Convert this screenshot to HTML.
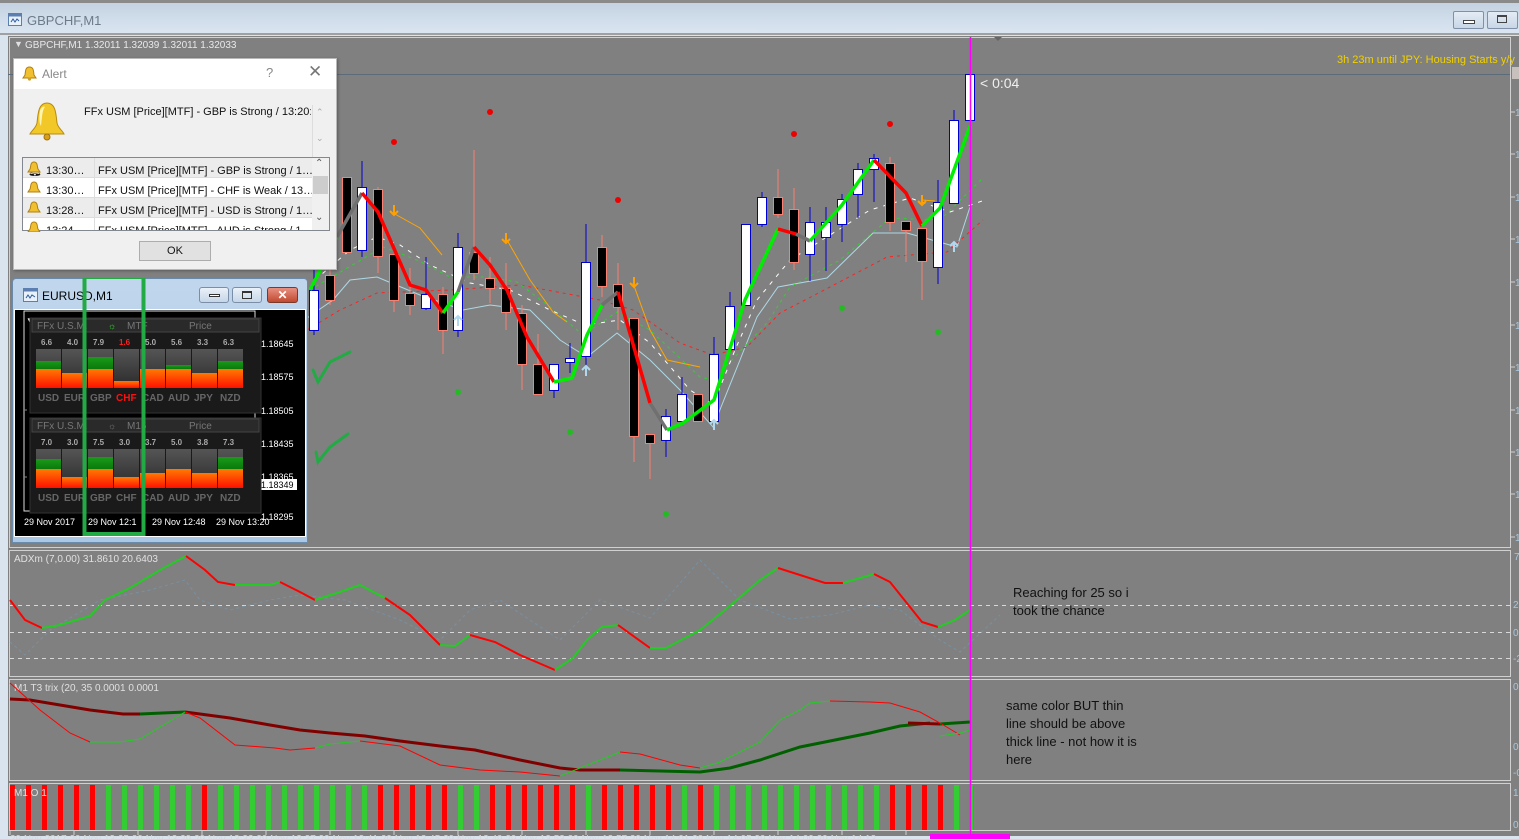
<!DOCTYPE html>
<html><head><meta charset="utf-8">
<style>
*{margin:0;padding:0;box-sizing:border-box}
body{width:1519px;height:839px;overflow:hidden;background:#d9e4ef;font-family:"Liberation Sans",sans-serif;position:relative}
.abs{position:absolute}
</style></head><body>
<!-- top bar -->
<div class="abs" style="left:0;top:0;width:1519px;height:3px;background:#8a8a8a"></div>
<div class="abs" style="left:0;top:3px;width:1519px;height:31px;background:linear-gradient(#c4d2e1,#dbe6f2)"></div>
<div class="abs" style="left:0;top:33px;width:1519px;height:2px;background:#a0a0a0"></div>
<svg class="abs" style="left:8px;top:13px" width="14" height="13"><rect x="0.5" y="0.5" width="13" height="12" fill="#e8f0fa" stroke="#5b7fb0"/><rect x="0.5" y="0.5" width="13" height="3" fill="#5b7fb0"/><path d="M3 9 L5 6 L7 9 L9 6 L11 8" stroke="#2a5aa0" fill="none"/></svg>
<div class="abs" style="left:27px;top:13px;font-size:13px;color:#6d7a88">GBPCHF,M1</div>
<div class="abs" style="left:1453px;top:11px;width:31px;height:18px;border:1px solid #8090a8;border-radius:2px;background:linear-gradient(#e4ecf5,#c8d6e6)"></div>
<div class="abs" style="left:1463px;top:20px;width:12px;height:4px;border:1px solid #444;background:#fff"></div>
<div class="abs" style="left:1487px;top:11px;width:31px;height:18px;border:1px solid #8090a8;border-radius:2px;background:linear-gradient(#e4ecf5,#c8d6e6)"></div>
<div class="abs" style="left:1497px;top:15px;width:10px;height:8px;border:1px solid #444;border-top-width:2px"></div>

<svg class="abs" style="left:0;top:0" width="1519" height="839">
<rect x="8" y="36" width="1511" height="800" fill="#808080"/>
<!-- panel borders -->
<g stroke="#d0d0d0" fill="none" stroke-width="1">
<rect x="9.5" y="37.5" width="1501" height="510"/>
<rect x="9.5" y="550.5" width="1501" height="126"/>
<rect x="9.5" y="679.5" width="1501" height="101"/>
<rect x="9.5" y="783.5" width="1501" height="47"/>
</g>
<line x1="8" y1="74.5" x2="1510" y2="74.5" stroke="#5c6b7a"/>
<rect x="1512" y="67" width="7" height="12" fill="#c8c0bc"/>
<!-- right ticks -->
<g stroke="#d0d0d0">
<line x1="1511" y1="112" x2="1515" y2="112"/><line x1="1511" y1="154" x2="1515" y2="154"/><line x1="1511" y1="197" x2="1515" y2="197"/><line x1="1511" y1="239" x2="1515" y2="239"/><line x1="1511" y1="282" x2="1515" y2="282"/><line x1="1511" y1="325" x2="1515" y2="325"/><line x1="1511" y1="367" x2="1515" y2="367"/><line x1="1511" y1="410" x2="1515" y2="410"/><line x1="1511" y1="452" x2="1515" y2="452"/><line x1="1511" y1="494" x2="1515" y2="494"/><line x1="1511" y1="537" x2="1515" y2="537"/>
</g>
<g font-size="10" fill="#a8c8e0" font-family="Liberation Sans,sans-serif">
<text x="1515" y="116">1</text><text x="1515" y="158">1</text><text x="1515" y="201">1</text><text x="1515" y="243">1</text><text x="1515" y="286">1</text><text x="1515" y="329">1</text><text x="1515" y="371">1</text><text x="1515" y="414">1</text><text x="1515" y="456">1</text><text x="1515" y="498">1</text><text x="1515" y="541">1</text>
<text x="1514" y="560">7</text><text x="1513" y="608">2</text><text x="1513" y="636">0</text><text x="1513" y="662">-2</text><text x="1513" y="690">0</text><text x="1513" y="750">0</text><text x="1513" y="776">-0</text><text x="1513" y="796">1</text><text x="1513" y="828">0</text>
</g>
<text x="1337" y="63" font-size="11" fill="#f0d000">3h 23m until JPY: Housing Starts y/y</text>
<text x="14" y="47" font-size="9" fill="#e0e0e0">▼</text>
<text x="25" y="48" font-size="10" fill="#e8e8e8">GBPCHF,M1  1.32011 1.32039 1.32011 1.32033</text>
<path d="M994 37 L1002 37 L998 41Z" fill="#666"/>

<!-- moving averages -->
<g fill="none" stroke-width="1">
<polyline stroke="#add8e6" points="307,318 333,300 350,280 377,277 420,295 463,310 490,305 530,310 560,340 587,357 617,333 650,360 680,390 713,427 740,360 757,317 778,287 827,278 873,233 907,233 957,247 970,207"/>
<polyline stroke="#ff2020" stroke-dasharray="3,4" points="307,330 340,310 377,293 450,290 520,285 600,300 633,310 680,343 713,355 747,347 780,313 830,287 887,257 947,252 983,220"/>
<polyline stroke="#30d030" stroke-dasharray="3,4" points="310,290 383,247 417,260 450,277 487,277 517,282 550,307 583,335 617,312 650,330 700,377 713,380 767,323 790,287 840,260 890,218 940,220 983,178"/>
<polyline stroke="#ffffff" stroke-dasharray="4,6" points="315,280 350,250 377,237 400,245 430,265 470,283 510,290 550,310 585,325 620,320 650,343 690,390 713,405 735,350 757,300 790,260 830,235 870,210 910,198 950,212 985,200"/>
<polyline stroke="#ffa500" points="393,213 420,228 442,255"/>
<polyline stroke="#ffa500" points="507,240 530,280 553,312 567,322"/>
<polyline stroke="#ffa500" points="633,283 650,330 667,360 700,367"/>
<polyline stroke="#ffa500" points="922,200 935,201"/>
</g>
<!-- candles -->
<g stroke-width="1">
<g stroke="#0000cc" fill="#fff"><line x1="314" y1="255" x2="314" y2="335"/><rect x="309.5" y="290.5" width="9" height="40"/></g>
<g stroke="#fa8072" fill="#000"><line x1="330" y1="265" x2="330" y2="305"/><rect x="325.5" y="275.5" width="9" height="25"/></g>
<g stroke="#fa8072" fill="#000"><rect x="342.5" y="177.5" width="9" height="75"/></g>
<g stroke="#0000cc" fill="#fff"><line x1="362" y1="161" x2="362" y2="257"/><rect x="357.5" y="187.5" width="9" height="63"/></g>
<g stroke="#fa8072" fill="#000"><line x1="378" y1="187" x2="378" y2="273"/><rect x="373.5" y="189.5" width="9" height="67"/></g>
<g stroke="#fa8072" fill="#000"><line x1="394" y1="254" x2="394" y2="312"/><rect x="389.5" y="254.5" width="9" height="46"/></g>
<g stroke="#fa8072" fill="#000"><line x1="410" y1="268" x2="410" y2="315"/><rect x="405.5" y="293.5" width="9" height="12"/></g>
<g stroke="#0000cc" fill="#fff"><line x1="426" y1="257" x2="426" y2="310"/><rect x="421.5" y="294.5" width="9" height="14"/></g>
<g stroke="#fa8072" fill="#000"><line x1="443" y1="287" x2="443" y2="354"/><rect x="438.5" y="294.5" width="9" height="36"/></g>
<g stroke="#0000cc" fill="#fff"><line x1="458" y1="233" x2="458" y2="337"/><rect x="453.5" y="247.5" width="9" height="83"/></g>
<g stroke="#fa8072" fill="#000"><line x1="474" y1="150" x2="474" y2="280"/><rect x="469.5" y="252.5" width="9" height="21"/></g>
<g stroke="#fa8072" fill="#000"><line x1="490" y1="257" x2="490" y2="303"/><rect x="485.5" y="278.5" width="9" height="10"/></g>
<g stroke="#fa8072" fill="#000"><line x1="506" y1="263" x2="506" y2="330"/><rect x="501.5" y="288.5" width="9" height="24"/></g>
<g stroke="#fa8072" fill="#000"><line x1="522" y1="305" x2="522" y2="390"/><rect x="517.5" y="313.5" width="9" height="51"/></g>
<g stroke="#fa8072" fill="#000"><line x1="538" y1="334" x2="538" y2="394"/><rect x="533.5" y="364.5" width="9" height="30"/></g>
<g stroke="#0000cc" fill="#fff"><line x1="554" y1="364" x2="554" y2="398"/><rect x="549.5" y="364.5" width="9" height="26"/></g>
<g stroke="#0000cc" fill="#fff"><line x1="570" y1="343" x2="570" y2="373"/><rect x="565.5" y="358.5" width="9" height="4"/></g>
<g stroke="#0000cc" fill="#fff"><line x1="586" y1="224" x2="586" y2="367"/><rect x="581.5" y="262.5" width="9" height="94"/></g>
<g stroke="#fa8072" fill="#000"><line x1="602" y1="235" x2="602" y2="297"/><rect x="597.5" y="247.5" width="9" height="39"/></g>
<g stroke="#fa8072" fill="#000"><line x1="618" y1="263" x2="618" y2="330"/><rect x="613.5" y="284.5" width="9" height="23"/></g>
<g stroke="#fa8072" fill="#000"><line x1="634" y1="318" x2="634" y2="462"/><rect x="629.5" y="318.5" width="9" height="118"/></g>
<g stroke="#fa8072" fill="#000"><line x1="650" y1="434" x2="650" y2="479"/><rect x="645.5" y="434.5" width="9" height="9"/></g>
<g stroke="#0000cc" fill="#fff"><line x1="666" y1="409" x2="666" y2="457"/><rect x="661.5" y="416.5" width="9" height="24"/></g>
<g stroke="#0000cc" fill="#fff"><line x1="682" y1="377" x2="682" y2="421"/><rect x="677.5" y="394.5" width="9" height="27"/></g>
<g stroke="#fa8072" fill="#000"><rect x="693.5" y="394.5" width="9" height="27"/></g>
<g stroke="#0000cc" fill="#fff"><line x1="714" y1="337" x2="714" y2="421"/><rect x="709.5" y="354.5" width="9" height="67"/></g>
<g stroke="#0000cc" fill="#fff"><line x1="730" y1="292" x2="730" y2="349"/><rect x="725.5" y="306.5" width="9" height="43"/></g>
<g stroke="#0000cc" fill="#fff"><rect x="741.5" y="224.5" width="9" height="81"/></g>
<g stroke="#0000cc" fill="#fff"><line x1="762" y1="192" x2="762" y2="227"/><rect x="757.5" y="197.5" width="9" height="27"/></g>
<g stroke="#fa8072" fill="#000"><line x1="778" y1="169" x2="778" y2="218"/><rect x="773.5" y="197.5" width="9" height="17"/></g>
<g stroke="#fa8072" fill="#000"><line x1="794" y1="188" x2="794" y2="270"/><rect x="789.5" y="209.5" width="9" height="53"/></g>
<g stroke="#0000cc" fill="#fff"><line x1="810" y1="207" x2="810" y2="281"/><rect x="805.5" y="222.5" width="9" height="32"/></g>
<g stroke="#0000cc" fill="#fff"><line x1="826" y1="207" x2="826" y2="271"/><rect x="821.5" y="222.5" width="9" height="15"/></g>
<g stroke="#0000cc" fill="#fff"><line x1="842" y1="194" x2="842" y2="242"/><rect x="837.5" y="199.5" width="9" height="25"/></g>
<g stroke="#0000cc" fill="#fff"><line x1="858" y1="163" x2="858" y2="218"/><rect x="853.5" y="169.5" width="9" height="25"/></g>
<g stroke="#0000cc" fill="#fff"><line x1="874" y1="154" x2="874" y2="202"/><rect x="869.5" y="158.5" width="9" height="11"/></g>
<g stroke="#fa8072" fill="#000"><line x1="890" y1="157" x2="890" y2="231"/><rect x="885.5" y="163.5" width="9" height="59"/></g>
<g stroke="#fa8072" fill="#000"><line x1="906" y1="221" x2="906" y2="262"/><rect x="901.5" y="221.5" width="9" height="9"/></g>
<g stroke="#fa8072" fill="#000"><line x1="922" y1="228" x2="922" y2="300"/><rect x="917.5" y="228.5" width="9" height="33"/></g>
<g stroke="#0000cc" fill="#fff"><line x1="938" y1="180" x2="938" y2="284"/><rect x="933.5" y="202.5" width="9" height="65"/></g>
<g stroke="#0000cc" fill="#fff"><line x1="954" y1="110" x2="954" y2="203"/><rect x="949.5" y="120.5" width="9" height="83"/></g>
<g stroke="#0000cc" fill="#fff"><rect x="965.5" y="74.5" width="9" height="46"/></g>
</g>
<!-- zigzag -->
<g fill="none" stroke-width="3.5" stroke-linejoin="round">
<polyline stroke="#00ee00" points="310,290 337,237"/>
<polyline stroke="#707070" points="337,237 362,193"/>
<polyline stroke="#ff0000" points="362,193 378,212 410,285 426,290 443,313"/>
<polyline stroke="#00ee00" points="443,313 458,292"/>
<polyline stroke="#707070" points="458,292 474,247"/>
<polyline stroke="#ff0000" points="474,247 490,265 507,290 527,337 554,382"/>
<polyline stroke="#00ee00" points="554,382 572,378 587,335 602,305"/>
<polyline stroke="#707070" points="602,305 618,292"/>
<polyline stroke="#ff0000" points="618,292 650,403"/>
<polyline stroke="#707070" points="650,403 667,430"/>
<polyline stroke="#00ee00" points="667,430 683,423 714,400 745,300 778,229"/>
<polyline stroke="#ff0000" points="778,229 796,234"/>
<polyline stroke="#707070" points="796,234 810,241"/>
<polyline stroke="#00ee00" points="810,241 842,205 874,160"/>
<polyline stroke="#ff0000" points="874,160 906,193 922,226"/>
<polyline stroke="#00ee00" points="922,226 940,208 954,170 970,126"/>
</g>
<!-- dots -->
<g fill="#ee0000"><circle cx="394" cy="142" r="3"/><circle cx="490" cy="112" r="3"/><circle cx="618" cy="200" r="3"/><circle cx="794" cy="134" r="3"/><circle cx="890" cy="124" r="3"/></g>
<g fill="#22bb22"><circle cx="458" cy="392" r="3"/><circle cx="570" cy="432" r="3"/><circle cx="666" cy="514" r="3"/><circle cx="842" cy="308" r="3"/><circle cx="938" cy="332" r="3"/></g>
<!-- arrows -->
<g stroke="#ffa000" stroke-width="2" fill="none"><path d="M394 205 v10 M390 211 l4 4 l4 -4"/><path d="M506 233 v10 M502 239 l4 4 l4 -4"/><path d="M634 277 v10 M630 283 l4 4 l4 -4"/><path d="M922 195 v10 M918 201 l4 4 l4 -4"/></g>
<g stroke="#b0d8ee" stroke-width="2" fill="none"><path d="M458 326 v-10 M454 320 l4 -4 l4 4"/><path d="M586 376 v-10 M582 370 l4 -4 l4 4"/><path d="M714 430 v-10 M710 424 l4 -4 l4 4"/><path d="M954 252 v-10 M950 246 l4 -4 l4 4"/></g>
<!-- checks -->
<g stroke="#22aa44" stroke-width="3" fill="none" stroke-linecap="round"><path d="M313 370 L318 382 L330 362 L350 352"/><path d="M316 452 L318 462 L330 447 L348 434"/></g>
<text x="980" y="88" font-size="14" fill="#f0f0f0">&lt; 0:04</text>

<!-- ADX panel -->
<text x="14" y="562" font-size="10" fill="#e0e0e0">ADXm (7,0.00) 31.8610 20.6403</text>
<g stroke="#d8d8d8" stroke-dasharray="4,4"><line x1="10" y1="605.5" x2="1510" y2="605.5"/><line x1="10" y1="632.5" x2="1510" y2="632.5"/><line x1="10" y1="658.5" x2="1510" y2="658.5"/></g>
<polyline fill="none" stroke="#7890a0" stroke-dasharray="3,3" points="10,642 25,655 50,630 100,600 150,590 185,580 200,600 230,610 270,600 300,595 345,600 400,620 440,640 470,610 500,600 560,640 590,610 600,600 650,618 700,560 740,600 790,619 830,615 870,605 900,610 940,640 960,652 1000,615"/>
<g fill="none" stroke-width="2">
<polyline stroke="#ff0000" points="10,600 25,620 42,628"/>
<polyline stroke="#22cc22" points="42,628 60,625 90,616 105,600 130,588 160,570 186,556"/>
<polyline stroke="#ff0000" points="186,556 205,570 218,582 235,585"/>
<polyline stroke="#22cc22" points="235,585 270,585 280,582"/>
<polyline stroke="#ff0000" points="280,582 300,592 315,600"/>
<polyline stroke="#22cc22" points="315,600 340,592 360,585 385,598"/>
<polyline stroke="#ff0000" points="385,598 410,615 440,645"/>
<polyline stroke="#22cc22" points="440,645 455,646 470,635"/>
<polyline stroke="#ff0000" points="470,635 495,642 520,655 555,670"/>
<polyline stroke="#22cc22" points="555,670 573,658 587,640 602,627 618,625"/>
<polyline stroke="#ff0000" points="618,625 650,648"/>
<polyline stroke="#22cc22" points="650,648 666,648 700,630 725,610 760,580 778,568"/>
<polyline stroke="#ff0000" points="778,568 825,583 843,583"/>
<polyline stroke="#22cc22" points="843,583 874,574"/>
<polyline stroke="#ff0000" points="874,574 890,582 922,622 938,627"/>
<polyline stroke="#22cc22" points="938,627 955,620 970,610"/>
</g>
<text font-size="13" fill="#111" font-family="Liberation Sans,sans-serif"><tspan x="1013" y="597">Reaching for 25 so i</tspan><tspan x="1013" y="615">took the chance</tspan></text>

<!-- T3 panel -->
<text x="14" y="691" font-size="10" fill="#e0e0e0">M1 T3 trix (20, 35 0.0001 0.0001</text>
<g fill="none">
<polyline stroke="#800000" stroke-width="3" points="10,699 30,700 60,705 90,710 123,714 140,714"/>
<polyline stroke="#006000" stroke-width="3" points="140,714 185,712"/>
<polyline stroke="#800000" stroke-width="3" points="185,712 230,718 270,725 300,730 330,733 365,736 400,741 440,746 475,750 520,760 560,768 580,770 620,770"/>
<polyline stroke="#006000" stroke-width="3" points="620,770 700,772 730,768 760,760 800,747 870,733 900,726 930,723"/>
<polyline stroke="#800000" stroke-width="3" points="908,723 940,724"/>
<polyline stroke="#006000" stroke-width="3" points="940,724 970,722"/>
<polyline stroke="#ff0000" points="10,683 40,710 70,733 90,742"/>
<polyline stroke="#22cc22" points="90,742 120,742 140,739 185,712"/>
<polyline stroke="#ff0000" points="185,712 200,718 235,745 275,748 290,750 315,748"/>
<polyline stroke="#22cc22" points="315,748 330,744 360,741"/>
<polyline stroke="#ff0000" points="360,741 400,746 440,765 480,770 520,772 560,776"/>
<polyline stroke="#22cc22" points="560,776 600,760 620,752"/>
<polyline stroke="#ff0000" points="620,752 640,754 680,765 700,768"/>
<polyline stroke="#22cc22" points="700,768 720,762 760,742 780,720 800,710 810,703 830,701"/>
<polyline stroke="#ff0000" points="830,701 870,702 890,703 920,712 940,723 960,735"/>
<polyline stroke="#22cc22" points="940,736 960,733 970,730"/>
</g>
<text font-size="13" fill="#111" font-family="Liberation Sans,sans-serif"><tspan x="1006" y="710">same color BUT thin</tspan><tspan x="1006" y="728">line should be above</tspan><tspan x="1006" y="746">thick line - not how it is</tspan><tspan x="1006" y="764">here</tspan></text>

<!-- histogram -->
<g fill="#ff0000"><rect x="10" y="785" width="5" height="45"/><rect x="26" y="785" width="5" height="45"/><rect x="42" y="785" width="5" height="45"/><rect x="58" y="785" width="5" height="45"/><rect x="74" y="785" width="5" height="45"/><rect x="90" y="785" width="5" height="45"/><rect x="202" y="785" width="5" height="45"/><rect x="378" y="785" width="5" height="45"/><rect x="394" y="785" width="5" height="45"/><rect x="410" y="785" width="5" height="45"/><rect x="426" y="785" width="5" height="45"/><rect x="442" y="785" width="5" height="45"/><rect x="490" y="785" width="5" height="45"/><rect x="506" y="785" width="5" height="45"/><rect x="522" y="785" width="5" height="45"/><rect x="538" y="785" width="5" height="45"/><rect x="554" y="785" width="5" height="45"/><rect x="570" y="785" width="5" height="45"/><rect x="602" y="785" width="5" height="45"/><rect x="618" y="785" width="5" height="45"/><rect x="634" y="785" width="5" height="45"/><rect x="650" y="785" width="5" height="45"/><rect x="666" y="785" width="5" height="45"/><rect x="698" y="785" width="5" height="45"/><rect x="890" y="785" width="5" height="45"/><rect x="906" y="785" width="5" height="45"/><rect x="922" y="785" width="5" height="45"/><rect x="938" y="785" width="5" height="45"/></g>
<g fill="#33cc33"><rect x="106" y="785" width="5" height="45"/><rect x="122" y="785" width="5" height="45"/><rect x="138" y="785" width="5" height="45"/><rect x="154" y="785" width="5" height="45"/><rect x="170" y="785" width="5" height="45"/><rect x="186" y="785" width="5" height="45"/><rect x="218" y="785" width="5" height="45"/><rect x="234" y="785" width="5" height="45"/><rect x="250" y="785" width="5" height="45"/><rect x="266" y="785" width="5" height="45"/><rect x="282" y="785" width="5" height="45"/><rect x="298" y="785" width="5" height="45"/><rect x="314" y="785" width="5" height="45"/><rect x="330" y="785" width="5" height="45"/><rect x="346" y="785" width="5" height="45"/><rect x="362" y="785" width="5" height="45"/><rect x="458" y="785" width="5" height="45"/><rect x="474" y="785" width="5" height="45"/><rect x="586" y="785" width="5" height="45"/><rect x="682" y="785" width="5" height="45"/><rect x="714" y="785" width="5" height="45"/><rect x="730" y="785" width="5" height="45"/><rect x="746" y="785" width="5" height="45"/><rect x="762" y="785" width="5" height="45"/><rect x="778" y="785" width="5" height="45"/><rect x="794" y="785" width="5" height="45"/><rect x="810" y="785" width="5" height="45"/><rect x="826" y="785" width="5" height="45"/><rect x="842" y="785" width="5" height="45"/><rect x="858" y="785" width="5" height="45"/><rect x="874" y="785" width="5" height="45"/><rect x="954" y="785" width="5" height="45"/><rect x="971" y="785" width="2" height="45"/></g>
<text x="14" y="796" font-size="10" fill="#e0e0e0">M1 O 1</text>
<!-- bottom axis -->
<g stroke="#d0d0d0"><line x1="10" y1="831" x2="10" y2="835"/><line x1="74" y1="831" x2="74" y2="835"/><line x1="138" y1="831" x2="138" y2="835"/><line x1="202" y1="831" x2="202" y2="835"/><line x1="266" y1="831" x2="266" y2="835"/><line x1="330" y1="831" x2="330" y2="835"/><line x1="394" y1="831" x2="394" y2="835"/><line x1="458" y1="831" x2="458" y2="835"/><line x1="522" y1="831" x2="522" y2="835"/><line x1="586" y1="831" x2="586" y2="835"/><line x1="650" y1="831" x2="650" y2="835"/><line x1="714" y1="831" x2="714" y2="835"/><line x1="778" y1="831" x2="778" y2="835"/><line x1="842" y1="831" x2="842" y2="835"/><line x1="906" y1="831" x2="906" y2="835"/></g>
<text x="10" y="842" font-size="10" fill="#d8d8d8">29 Nov 2017   29 Nov 13:25  29 Nov 13:29  29 Nov 13:33  29 Nov 13:37  29 Nov 13:41  29 Nov 13:45  29 Nov 13:49  29 Nov 13:53  29 Nov 13:57  29 Nov 14:01  29 Nov 14:05  29 Nov 14:09  29 Nov 14:13</text>
<rect x="930" y="834" width="80" height="5" fill="#ff00ff"/>
<line x1="970.5" y1="37" x2="970.5" y2="836" stroke="#ff00ff" stroke-width="1.5"/>
</svg>

<!-- Alert dialog -->
<div class="abs" style="left:13px;top:58px;width:324px;height:212px;background:#f0f0f0;border:1px solid #b8b8b8;box-shadow:1px 1px 3px rgba(0,0,0,.3)">
 <div style="position:absolute;left:0;top:0;width:322px;height:30px;background:#fff"></div>
 <svg style="position:absolute;left:8px;top:7px" width="15" height="15"><path d="M7.5 1 C3 1 3.5 6 3 9 L1 12 H14 L12 9 C11.5 6 12 1 7.5 1Z" fill="#f0c030" stroke="#b08010"/><circle cx="7.5" cy="13" r="1.6" fill="#d0a020"/></svg>
 <div style="position:absolute;left:28px;top:8px;font-size:12px;color:#888">Alert</div>
 <div style="position:absolute;left:252px;top:6px;font-size:13px;color:#888">?</div>
 <div style="position:absolute;left:294px;top:3px;font-size:17px;color:#777">✕</div>
 <svg style="position:absolute;left:12px;top:42px" width="42" height="40"><path d="M21 2 C12 2 12 14 11 22 C10 27 6 29 4 33 H38 C36 29 32 27 31 22 C30 14 30 2 21 2Z" fill="#f2c828" stroke="#b88a10"/><path d="M14 10 C15 6 18 5 19 6 C16 9 16 18 15 25 C13 22 13 15 14 10Z" fill="#fff4b0"/><circle cx="21" cy="36" r="3" fill="#d8a018" stroke="#a07010"/></svg>
 <div style="position:absolute;left:70px;top:47px;font-size:11px;color:#111;white-space:nowrap;width:227px;overflow:hidden">FFx USM [Price][MTF] - GBP is Strong / 13:20:3</div>
 <div style="position:absolute;left:298px;top:46px;width:1px;height:60px;background:#ddd"></div>
 <div style="position:absolute;left:302px;top:48px;font-size:9px;color:#aaa">⌃</div>
 <div style="position:absolute;left:302px;top:74px;font-size:9px;color:#aaa">⌄</div>
 <div style="position:absolute;left:8px;top:98px;width:308px;height:74px;border:1px solid #828790;background:#fff;overflow:hidden;font-size:11px;color:#111">
  <div style="position:absolute;left:0;top:0;width:289px;height:20px;background:#ececec;border-bottom:1px solid #ddd"></div>
  <div style="position:absolute;left:0;top:40px;width:289px;height:20px;background:#ececec;border-bottom:1px solid #ddd"></div>
  <div style="position:absolute;left:0;top:20px;width:289px;height:20px;border-bottom:1px solid #ddd"></div>
  <div style="position:absolute;left:71px;top:0;width:1px;height:74px;background:#ddd"></div>
  <div style="position:absolute;left:5px;top:3px;line-height:20px">🔔︎</div>
  <div style="position:absolute;left:23px;top:3px;line-height:20px;white-space:pre">13:30…
13:30…
13:28…
13:24</div>
  <div style="position:absolute;left:75px;top:3px;line-height:20px;white-space:pre">FFx USM [Price][MTF] - GBP is Strong / 1…
FFx USM [Price][MTF] - CHF is Weak / 13…
FFx USM [Price][MTF] - USD is Strong / 1…
FFx USM [Price][MTF] - AUD is Strong / 1</div>
  <div style="position:absolute;left:289px;top:0;width:17px;height:72px;background:#f0f0f0"></div>
  <div style="position:absolute;left:290px;top:18px;width:15px;height:18px;background:#cdcdcd"></div>
  <div style="position:absolute;left:292px;top:0;font-size:10px;color:#555">⌃</div>
  <div style="position:absolute;left:292px;top:54px;font-size:10px;color:#555">⌄</div>
 </div>
 <svg style="position:absolute;left:13px;top:101px" width="14" height="72"><g fill="#f0c030" stroke="#b08010"><path d="M7 2 C3 2 4 7 3 9 L1 12 H13 L11 9 C10 7 11 2 7 2Z"/><path d="M7 22 C3 22 4 27 3 29 L1 32 H13 L11 29 C10 27 11 22 7 22Z"/><path d="M7 42 C3 42 4 47 3 49 L1 52 H13 L11 49 C10 47 11 42 7 42Z"/><path d="M7 62 C3 62 4 67 3 69 L1 72 H13 L11 69 C10 67 11 62 7 62Z"/></g></svg>
 <div style="position:absolute;left:125px;top:182px;width:72px;height:20px;border:1px solid #adadad;background:#e1e1e1;font-size:11px;text-align:center;line-height:18px;color:#111">OK</div>
</div>

<!-- EURUSD window -->
<div class="abs" style="left:12px;top:278px;width:296px;height:265px;background:linear-gradient(#c0d6ec,#aac8e6);border:1px solid #6a8aaa;border-radius:4px 4px 0 0">
 <svg style="position:absolute;left:10px;top:9px" width="15" height="14"><rect x="0.5" y="0.5" width="14" height="13" fill="#e8f0fa" stroke="#5b7fb0"/><rect x="0.5" y="0.5" width="14" height="3" fill="#5b7fb0"/><path d="M3 10 L5 7 L7 10 L9 7 L12 9" stroke="#2a5aa0" fill="none"/></svg>
 <div style="position:absolute;left:29px;top:10px;font-size:12px;color:#000">EURUSD,M1</div>
 <div style="position:absolute;left:186px;top:8px;width:30px;height:16px;border:1px solid #7a8ea8;border-radius:3px;background:linear-gradient(#eaf1f8,#c6d6e8)"><div style="margin:6px auto 0;width:11px;height:3px;border:1px solid #333;background:#fff"></div></div>
 <div style="position:absolute;left:219px;top:8px;width:30px;height:16px;border:1px solid #7a8ea8;border-radius:3px;background:linear-gradient(#eaf1f8,#c6d6e8)"><div style="margin:3px auto 0;width:10px;height:8px;border:1px solid #333;border-top-width:2px"></div></div>
 <div style="position:absolute;left:254px;top:8px;width:31px;height:16px;border:1px solid #7a3a2a;border-radius:3px;background:linear-gradient(#e89080,#c04a30);color:#fff;font-size:12px;font-weight:bold;text-align:center;line-height:14px">✕</div>
 <div style="position:absolute;left:1px;top:30px;width:292px;height:228px;background:#000;border:1px solid #fff"></div>
</div>
<svg class="abs" style="left:12px;top:278px" width="296" height="265">
 <rect x="12" y="33" width="231" height="200" fill="none" stroke="#ddd"/>
 <g stroke="#888" stroke-dasharray="3,3"><line x1="12" y1="132" x2="243" y2="132"/><line x1="12" y1="199" x2="243" y2="199"/></g>
 <g font-size="9" fill="#fff" font-family="Liberation Sans,sans-serif"><text x="249" y="69">1.18645</text><text x="249" y="102">1.18575</text><text x="249" y="136">1.18505</text><text x="249" y="169">1.18435</text><text x="249" y="202">1.18365</text><text x="249" y="242">1.18295</text><text x="12" y="247">29 Nov 2017</text><text x="76" y="247">29 Nov 12:1</text><text x="140" y="247">29 Nov 12:48</text><text x="204" y="247">29 Nov 13:20</text></g>
 <rect x="245" y="201" width="40" height="11" fill="#fff"/><text x="249" y="210" font-size="9" fill="#000">1.18349</text>
 <text x="14" y="45" font-size="8" fill="#fff">▼</text>
 <!-- panel 1 -->
 <rect x="18" y="40" width="231" height="95" fill="#1a1a1a" stroke="#333"/>
 <rect x="20" y="41" width="227" height="13" fill="#2a2a2a" stroke="#444"/>
 <g font-size="10" fill="#777" font-family="Liberation Sans,sans-serif"><text x="25" y="51">FFx U.S.M.</text><text x="115" y="51">MTF</text><text x="177" y="51">Price</text></g>
 <text x="96" y="51" font-size="9" fill="#33dd33">☼</text>
 <g font-size="8" fill="#aaa" font-family="Liberation Sans,sans-serif" font-weight="bold"><text x="29" y="67">6.6</text><text x="55" y="67">4.0</text><text x="81" y="67">7.9</text><text x="107" y="67" fill="#ff2020">1.6</text><text x="133" y="67">5.0</text><text x="159" y="67">5.6</text><text x="185" y="67">3.3</text><text x="211" y="67">6.3</text></g>
 <g font-size="10" fill="#666" font-family="Liberation Sans,sans-serif" font-weight="bold"><text x="26" y="123">USD</text><text x="52" y="123">EUR</text><text x="78" y="123">GBP</text><text x="104" y="123" fill="#ff1010">CHF</text><text x="130" y="123">CAD</text><text x="156" y="123">AUD</text><text x="182" y="123">JPY</text><text x="208" y="123">NZD</text></g>
 <!-- panel 2 -->
 <rect x="18" y="140" width="231" height="95" fill="#1a1a1a" stroke="#333"/>
 <rect x="20" y="141" width="227" height="13" fill="#2a2a2a" stroke="#444"/>
 <g font-size="10" fill="#777" font-family="Liberation Sans,sans-serif"><text x="25" y="151">FFx U.S.M.</text><text x="115" y="151">M15</text><text x="177" y="151">Price</text></g>
 <text x="96" y="151" font-size="9" fill="#777">☼</text>
 <g font-size="8" fill="#aaa" font-family="Liberation Sans,sans-serif" font-weight="bold"><text x="29" y="167">7.0</text><text x="55" y="167">3.0</text><text x="81" y="167">7.5</text><text x="107" y="167">3.0</text><text x="133" y="167">3.7</text><text x="159" y="167">5.0</text><text x="185" y="167">3.8</text><text x="211" y="167">7.3</text></g>
 <g font-size="10" fill="#666" font-family="Liberation Sans,sans-serif" font-weight="bold"><text x="26" y="223">USD</text><text x="52" y="223">EUR</text><text x="78" y="223">GBP</text><text x="104" y="223">CHF</text><text x="130" y="223">CAD</text><text x="156" y="223">AUD</text><text x="182" y="223">JPY</text><text x="208" y="223">NZD</text></g>
 <defs><linearGradient id="gr" x1="0" y1="0" x2="0" y2="1"><stop offset="0" stop-color="#555"/><stop offset="1" stop-color="#2a2a2a"/></linearGradient>
 <linearGradient id="or" x1="0" y1="0" x2="0" y2="1"><stop offset="0" stop-color="#ff7a00"/><stop offset="1" stop-color="#ff1000"/></linearGradient>
 <linearGradient id="gn" x1="0" y1="0" x2="0" y2="1"><stop offset="0" stop-color="#1a9a1a"/><stop offset="1" stop-color="#0a7a0a"/></linearGradient></defs>
 <!-- bars panel1: area y 71-110 -->
 <g fill="url(#gr)"><rect x="24" y="71" width="25" height="39"/><rect x="50" y="71" width="25" height="39"/><rect x="76" y="71" width="25" height="39"/><rect x="102" y="71" width="25" height="39"/><rect x="128" y="71" width="25" height="39"/><rect x="154" y="71" width="25" height="39"/><rect x="180" y="71" width="25" height="39"/><rect x="206" y="71" width="25" height="39"/>
 <rect x="24" y="171" width="25" height="39"/><rect x="50" y="171" width="25" height="39"/><rect x="76" y="171" width="25" height="39"/><rect x="102" y="171" width="25" height="39"/><rect x="128" y="171" width="25" height="39"/><rect x="154" y="171" width="25" height="39"/><rect x="180" y="171" width="25" height="39"/><rect x="206" y="171" width="25" height="39"/></g>
 <g fill="url(#gn)"><rect x="24" y="83" width="25" height="8"/><rect x="76" y="79" width="25" height="12"/><rect x="154" y="87" width="25" height="4"/><rect x="206" y="83" width="25" height="8"/>
 <rect x="24" y="181" width="25" height="10"/><rect x="76" y="179" width="25" height="12"/><rect x="206" y="179" width="25" height="12"/></g>
 <g fill="url(#or)"><rect x="24" y="91" width="25" height="19"/><rect x="50" y="95" width="25" height="15"/><rect x="76" y="91" width="25" height="19"/><rect x="102" y="103" width="25" height="7"/><rect x="128" y="91" width="25" height="19"/><rect x="154" y="91" width="25" height="19"/><rect x="180" y="95" width="25" height="15"/><rect x="206" y="91" width="25" height="19"/>
 <rect x="24" y="191" width="25" height="19"/><rect x="50" y="199" width="25" height="11"/><rect x="76" y="191" width="25" height="19"/><rect x="102" y="199" width="25" height="11"/><rect x="128" y="195" width="25" height="15"/><rect x="154" y="191" width="25" height="19"/><rect x="180" y="195" width="25" height="15"/><rect x="206" y="191" width="25" height="19"/></g>
 <rect x="72.5" y="-1" width="59" height="257" fill="none" stroke="#22aa44" stroke-width="4"/>
</svg>
</body></html>
